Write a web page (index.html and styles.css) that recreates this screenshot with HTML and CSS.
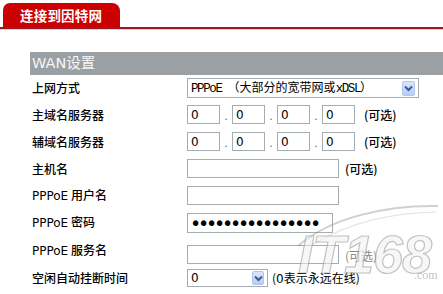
FILE: index.html
```html
<!DOCTYPE html>
<html lang="zh-CN">
<head>
<meta charset="utf-8">
<link rel="stylesheet" href="styles.css">
</head>
<body>
<div class="tabs"><div class="tab">连接到因特网</div></div>
<section class="panel">
  <div class="bar">WAN设置</div>
  <div class="form">
    <div class="label">上网方式</div>
    <div class="field">
      <div class="select wide"><span class="val"><span class="mono">PPPoE </span>（大部分的宽带网或<span class="mono">xDSL</span>）</span><span class="arrow"><svg width="9" height="7" viewBox="0 0 9 7"><path d="M1 1.5 L4.5 5 L8 1.5" fill="none" stroke="#3b5998" stroke-width="2"/></svg></span></div>
    </div>

    <div class="label">主域名服务器</div>
    <div class="field">
      <div class="ip"><input class="oct" value="0"><span class="dot">.</span><input class="oct" value="0"><span class="dot">.</span><input class="oct" value="0"><span class="dot">.</span><input class="oct" value="0"></div>
      <span class="opt ip-opt">(可选)</span>
    </div>

    <div class="label">辅域名服务器</div>
    <div class="field">
      <div class="ip"><input class="oct" value="0"><span class="dot">.</span><input class="oct" value="0"><span class="dot">.</span><input class="oct" value="0"><span class="dot">.</span><input class="oct" value="0"></div>
      <span class="opt ip-opt">(可选)</span>
    </div>

    <div class="label">主机名</div>
    <div class="field">
      <input class="text">
      <span class="opt">(可选)</span>
    </div>

    <div class="label"><span class="lat">PPPoE</span> 用户名</div>
    <div class="field"><input class="text"></div>

    <div class="label"><span class="lat">PPPoE</span> 密码</div>
    <div class="field"><input class="pass" type="password" value="aaaaaaaaaaaaaaaa"></div>

    <div class="label"><span class="lat">PPPoE</span> 服务名</div>
    <div class="field low">
      <input class="text">
      <span class="opt faint">(可选)</span>
    </div>

    <div class="label">空闲自动挂断时间</div>
    <div class="field">
      <div class="select small"><span class="val num">0</span><span class="arrow"><svg width="9" height="7" viewBox="0 0 9 7"><path d="M1 1.5 L4.5 5 L8 1.5" fill="none" stroke="#3b5998" stroke-width="2"/></svg></span></div>
      <span class="hint">(<span class="lat">0</span>表示永远在线)</span>
    </div>
  </div>
</section>

<div class="watermark">
  <svg class="swoosh" width="150" height="50" viewBox="0 0 150 50"><path d="M8 46 C40 18 95 5 148 6" fill="none" stroke="rgba(150,150,150,0.45)" stroke-width="2"/><path d="M22 45 C60 22 100 13 146 12" fill="none" stroke="rgba(170,170,170,0.35)" stroke-width="1.2"/></svg>
  <span class="wm-big">IT168</span><span class="wm-com">.com</span>
</div>
</body>
</html>
```
FILE: styles.css
```css
* { box-sizing: border-box; }
html, body {
  margin: 0;
  padding: 0;
  background: #ffffff;
}
body {
  position: relative;
  width: 443px;
  height: 294px;
  overflow: hidden;
  font-family: "Noto Sans CJK SC", sans-serif;
  font-size: 12px;
  color: #000;
}

.tabs {
  height: 29px;
  padding: 3px 0 0 3px;
  border-bottom: 2px solid #9b1a22;
  box-shadow: 0 1px 0 #f2c9cb;
}
.tab {
  width: 117px;
  height: 24px;
  background: #cc0000;
  border-radius: 7px 8px 0 0;
  color: #fff;
  font-weight: bold;
  font-size: 13.5px;
  line-height: 24px;
  padding-left: 17px;
  letter-spacing: 0.2px;
}

.panel {
  margin: 23px 0 0 30px;
}
.bar {
  height: 23px;
  background: #9aa0a4;
  color: #f6f6f6;
  font-family: "DejaVu Sans", "Noto Sans CJK SC", sans-serif;
  font-size: 14.5px;
  line-height: 23px;
  padding-left: 2px;
}

.form {
  display: grid;
  grid-template-columns: 157px 1fr;
  grid-template-rows: 26px 27px 27px 27px 27px 27px 29px 26px;
  align-items: center;
}
.label {
  padding-left: 2px;
  font-size: 12px;
  font-weight: 500;
  line-height: 16px;
  white-space: nowrap;
}
.lat {
  font-family: "DejaVu Sans", sans-serif;
  font-size: 12px;
  font-weight: normal;
}
.field {
  display: flex;
  align-items: center;
  height: 100%;
}
.field.low {
  align-items: flex-end;
  padding-bottom: 1px;
}

.select {
  display: flex;
  align-items: center;
  justify-content: space-between;
  height: 20px;
  border: 1px solid #a5acb2;
  background: #fff;
  padding: 0 3px 0 3px;
}
.select.wide { width: 232px; }
.select.small { width: 81px; height: 18px; }
.val {
  font-size: 12px;
  line-height: 16px;
  white-space: nowrap;
}
.mono {
  font-family: "Liberation Mono", monospace;
  font-size: 12.5px;
  letter-spacing: -1.4px;
}
.num {
  font-family: "DejaVu Sans", sans-serif;
}
.arrow {
  display: flex;
  align-items: center;
  justify-content: center;
  width: 13px;
  height: 15px;
  background: linear-gradient(#dbe6fc, #b8cdf6);
  border: 1px solid #b2c4ea;
  border-radius: 2px;
}
.select.small .arrow { height: 14px; width: 12px; }

.ip {
  display: flex;
  align-items: center;
}
.oct {
  width: 33px;
  height: 19px;
  border: 1px solid #a5acb2;
  padding: 0 3px;
  font-family: "DejaVu Sans", sans-serif;
  font-size: 12px;
  color: #000;
  background: #fff;
  outline: none;
}
.dot {
  width: 12px;
  text-align: center;
  font-family: "DejaVu Sans", sans-serif;
  font-size: 11px;
  color: #666;
  padding-top: 4px;
}
.opt {
  margin-left: 6px;
  font-size: 12px;
  font-weight: 500;
  line-height: 16px;
}
.ip-opt { margin-left: 9px; }
.opt.faint { color: #888; font-weight: normal; }

.text {
  width: 152px;
  height: 19px;
  border: 1px solid #a5acb2;
  background: #fff;
  outline: none;
  padding: 0 3px;
}
.pass {
  width: 146px;
  height: 20px;
  border: 1px solid #a5acb2;
  background: #fff;
  outline: none;
  padding: 0 2px;
  font-family: "DejaVu Sans", sans-serif;
  font-size: 19px;
  letter-spacing: -3.2px;
  color: #000;
}

.hint {
  margin-left: 4px;
  font-size: 12px;
  line-height: 16px;
  white-space: nowrap;
}

.watermark {
  position: absolute;
  left: 290px;
  top: 200px;
  width: 150px;
  height: 94px;
  pointer-events: none;
}
.swoosh {
  position: absolute;
  left: 0;
  top: 0;
}
.wm-big {
  position: absolute;
  left: 8px;
  top: 22px;
  font-family: "Liberation Sans", sans-serif;
  font-style: italic;
  font-weight: bold;
  font-size: 54px;
  line-height: 64px;
  letter-spacing: -1px;
  color: rgba(240, 240, 240, 0.5);
  -webkit-text-stroke: 1.2px rgba(140, 140, 140, 0.5);
}
.wm-com {
  position: absolute;
  left: 124px;
  top: 68px;
  font-family: "Liberation Serif", serif;
  font-size: 12px;
  color: rgba(150, 150, 150, 0.6);
}
```
